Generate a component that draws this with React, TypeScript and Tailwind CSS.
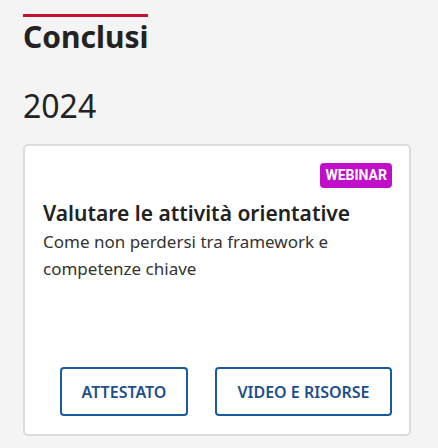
export default function App() {
  return (
    <div className="min-h-[448px] w-full bg-[#f4f4f4] pl-[23px] pr-[27px] pt-[14px] pb-4 font-['Noto_Sans',sans-serif] text-[#222]">
      <div className="w-[125px] h-[3px] bg-[#c8102e]" />
      <h2 className="mt-[2px] text-[30px] leading-[36px] font-bold text-[#222]">Conclusi</h2>
      <h3 className="mt-[32px] text-[32px] leading-[38px] font-normal text-[#222]">2024</h3>

      <div className="mt-[19px] bg-white border-2 border-[#dcdcdc] rounded-[5px] pt-[17px] pb-[18px] pl-[18px] pr-[17px]">
        <div className="flex justify-end">
          <span className="rounded-[4px] bg-[#c10ec9] px-[5px] h-[25px] flex items-center text-[14px] font-bold text-white font-['Roboto',sans-serif]">
            WEBINAR
          </span>
        </div>
        <h4 className="mt-[11px] text-[21px] leading-[28px] font-semibold text-[#222]">
          Valutare le attività orientative
        </h4>
        <p className="mt-[1px] text-[17px] leading-[27px] text-[#333]">
          Come non perdersi tra framework e competenze chiave
        </p>
        <div className="mt-[85px] flex justify-end gap-[27px]">
          <button className="w-[128px] h-[49px] rounded-[4px] border-2 border-[#1c5aa0] text-[16px] font-semibold text-[#1c4f8c]">
            ATTESTATO
          </button>
          <button className="w-[177px] h-[49px] rounded-[4px] border-2 border-[#1c5aa0] text-[16px] font-semibold text-[#1c4f8c]">
            VIDEO E RISORSE
          </button>
        </div>
      </div>
    </div>
  )
}
